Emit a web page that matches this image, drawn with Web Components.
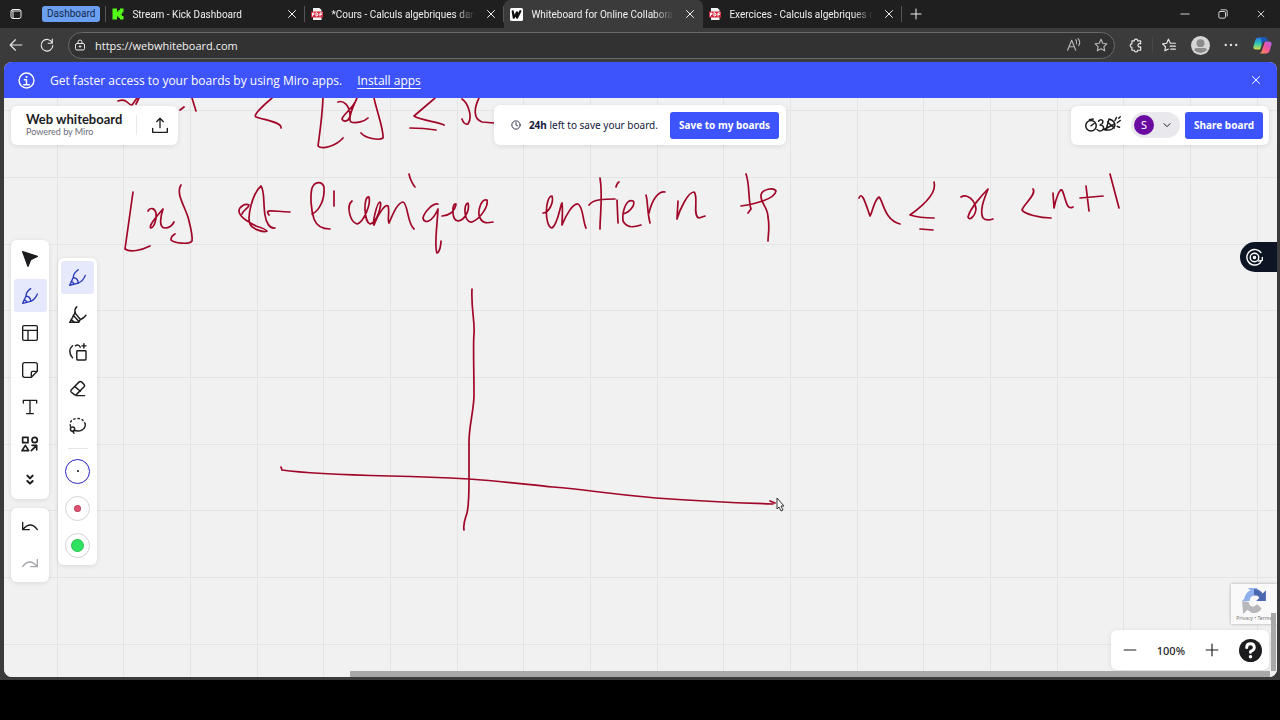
<!DOCTYPE html>
<html lang="en">
<head>
<meta charset="utf-8">
<meta name="viewport" content="width=device-width, initial-scale=1">
<title>Whiteboard for Online Collaboration</title>
<style>
    html, body {
        margin: 0;
        height: 100%;
        background: #000;
    }

    body {
        display: flex;
        flex-direction: column;
        overflow: hidden;
        font-family: "Noto Sans", "Open Sans", sans-serif;
        font-size: 12px;
        --color-primary: #3d53fb;
        --color-chrome: #3b3b3b;
        --color-ink: #a00628;
    }

    browser-window {
        flex: 1;
        margin-bottom: 40px;
    }
</style>
</head>
<body>
<browser-window>
    <tab-strip slot="tabs">
        <browser-tab icon="kick">Stream - Kick Dashboard</browser-tab>
        <browser-tab icon="pdf">*Cours - Calculs algebriques dans R</browser-tab>
        <browser-tab icon="whiteboard" active>Whiteboard for Online Collaboration</browser-tab>
        <browser-tab icon="pdf">Exercices - Calculs algebriques dans R</browser-tab>
    </tab-strip>
    <address-bar slot="toolbar" url="https://webwhiteboard.com"></address-bar>
    <promo-banner>Get faster access to your boards by using Miro apps.</promo-banner>
    <white-board>
        <ink-canvas slot="canvas"></ink-canvas>
        <board-title slot="header"></board-title>
        <save-notice slot="header"></save-notice>
        <share-panel slot="header"></share-panel>
        <tool-rail slot="tools"></tool-rail>
        <pen-panel slot="tools"></pen-panel>
        <side-dock slot="side"></side-dock>
    </white-board>
</browser-window>

<script>
const ICONS = {
    workspaces: '<rect x="2" y="3" width="20" height="18" rx="4"/><path d="M4 6h16M6 7v13"/>',
    kick: '<path fill="#53fc18" stroke="none" d="M1 1h9v6h3V4h3V1h7v8h-3v3h-3v1h3v3h3v7h-7v-3h-3v-3h-3v6H1z"/>',
    pdf: '<path fill="#f5f5f5" stroke="none" d="M4 0h13l4 4v20H4z"/><path fill="#d5293d" stroke="none" d="M0 7h24v12H0z"/><path stroke="#fff" stroke-width="2" d="M3 16v-6h3v3H3M10 10v6h2l2-2v-2l-2-2zM18 16v-6h4M18 13h3"/>',
    whiteboard: '<rect width="24" height="24" rx="3" fill="#fff" stroke="none"/><path d="M5 6l2 12 6-10v10l6-12" stroke="#111" stroke-width="4"/>',
    close: '<path d="M5 5l14 14M19 5L5 19"/>',
    plus: '<path d="M12 2v20M2 12h20"/>',
    minus: '<path d="M2 12h20"/>',
    restore: '<rect x="2" y="6" width="16" height="16" rx="3"/><path d="M7 2h12a3 3 0 0 1 3 3v12"/>',
    back: '<path d="M22 12H2M11 3l-9 9 9 9"/>',
    reload: '<path d="M21 8A10 10 0 1 0 22 13M21 2v7h-7"/>',
    lock: '<rect x="3" y="9" width="18" height="13" rx="3"/><path d="M8 9V6a4 4 0 0 1 8 0v3"/><circle cx="12" cy="15" r="1.5" fill="currentColor"/>',
    readAloud: '<path d="M1 21L8 4l7 17M4 15h8M15 3q3 3 1 7M19 1q5 6 1 12"/>',
    star: '<path d="M12 2l3 7 7 .8-5 5 1.300 7.200L12 18.500 5.700 22 7 14.800l-5-5L9 9z"/>',
    puzzle: '<path d="M5 5h4a3 3 0 0 1 6 0h5v5a3 3 0 1 0 0 5v6h-5a3 3 0 0 1-6 0H5v-5a3 3 0 0 1 0-6z"/>',
    favorites: '<path d="M14 8l-3-6-3 7-7 1 5 5-1 7 6-3M14 9h9M14 14h9M15 19h8"/>',
    dots: '<g fill="currentColor" stroke="none"><circle cx="3" cy="12" r="2"/><circle cx="12" cy="12" r="2"/><circle cx="21" cy="12" r="2"/></g>',
    profile: '<g stroke="none"><circle cx="12" cy="12" r="12" fill="#d6d6d6"/><circle cx="12" cy="9" r="5" fill="#8c8c8c"/><path d="M4 18q0-3 3-3h10q3 0 3 3-8 7-16 0z" fill="#8c8c8c"/></g>',
    copilot: '<defs><linearGradient id="a" x1="0" y1="0" x2="0" y2="1"><stop stop-color="#2a75e8"/><stop offset=".5" stop-color="#2cc7b5"/><stop offset="1" stop-color="#d5df45"/></linearGradient><linearGradient id="b" x1="1" y1="0" x2="0" y2="1"><stop stop-color="#aa62ee"/><stop offset=".5" stop-color="#f45597"/><stop offset="1" stop-color="#ff9a4b"/></linearGradient></defs><g stroke="none"><path fill="url(#a)" d="M7 2h9q-3 1-4 6l-3 9H4q-5 0-3-5l2-7q1-3 4-3z"/><path fill="#1958bd" d="M10 2h6q2 0 3 5h-5q-2 0-3 4z"/><path fill="url(#b)" d="M17 22H8q3-1 4-6l3-9h5q5 0 3 5l-2 7q-1 3-4 3z"/></g>',
    info: '<circle cx="12" cy="12" r="10.500"/><path d="M9 11h3v7M8 18h8" /><circle cx="12" cy="7" r="1.500" fill="currentColor" stroke="none"/>',
    exportBoard: '<path d="M12 16V2M7 7l5-5 5 5M1 17v6h22v-6"/>',
    clock: '<circle cx="12" cy="12" r="10"/><path d="M12 6v6l4 2"/>',
    down: '<path d="M3 8l9 9 9-9"/>',
    select: '<path fill="currentColor" d="M1 1l22 7-10 5-4 10z"/>',
    pen: '<path d="M13 1Q6 6 6 12L1 23l12-3Q20 17 23 9M6 12q7 1 7 8M3 18q3 0 4 3"/>',
    marker: '<path d="M11 1Q7 5 9 9L1 23h13l2-4q4-1 8-6M8 9l8 10M6 13l8 9M3 19l5 4"/>',
    template: '<rect x="1" y="1" width="22" height="22" rx="2"/><path d="M1 8h22M9 8v15"/>',
    sticky: '<path d="M23 14V4a3 3 0 0 0-3-3H4a3 3 0 0 0-3 3v16a3 3 0 0 0 3 3h10zM14 23v-7a2 2 0 0 1 2-2h7"/>',
    text: '<path d="M2 6V2h20v4M12 2v20M7 22h10"/>',
    shapes: '<g stroke-width="2.500"><rect x="1" y="2" width="8" height="8"/><circle cx="19" cy="6" r="4"/><path d="M5 14l5 8H0zM14 22l8-8M15 14h7v7"/></g>',
    more: '<path stroke-width="3" d="M8 4l4 4 4-4M8 12l4 4 4-4"/>',
    undo: '<path d="M1 5v11h10M1 16Q13 2 23 16"/>',
    redo: '<path d="M23 5v11H13M23 16Q11 2 1 16"/>',
    smart: '<rect x="11" y="11" width="13" height="13" rx="1"/><path d="M5 21Q-3 11 5 4M9 4q4-3 7 2M18 4h6M21 1v6"/>',
    eraser: '<path d="M3 14L14 3q2-2 4 0l3 3q2 2 0 4L10 21H8l-5-4q-1-1 0-3zM8 9l8 7M10 22h12"/>',
    lasso: '<circle cx="5" cy="17" r="3"/><path d="M7 19q-2 2 0 4M8 19c7 2 15-1 15-8 0-1 0-2-1-3"/><path d="M2 13Q0 3 12 2q7 0 10 6" stroke-dasharray="2 4"/>',
    doodle: '<circle cx="8" cy="13" r="7"/><path d="M8 13l4-3M6 5l5-1M18 7c3-4 8-1 5 3l-3 2c7 0 6 8-1 8l-3-2M28 19l4-15q8 2 8 9-4 8-15 5l14-7M30 8l9 8M40 6l2-4M43 9l4-3M43 14l3 1M45 3l2-2"/>',
    spiral: '<circle cx="12" cy="12" r="6"/><circle cx="12" cy="12" r="1.500" fill="currentColor"/><path d="M21 5A11 11 0 1 0 16 22q4-1 5-4M23 12v4l-5 1"/>',
    help: '<circle cx="12" cy="12" r="12" fill="currentColor" stroke="none"/><path stroke="#fff" stroke-width="3" d="M8 9q0-4 4-4t4 4q0 2-4 4v1"/><circle cx="12" cy="18.500" r="1.800" fill="#fff" stroke="none"/>',
    recaptcha: '<g stroke="none"><path fill="#8fb0ed" d="M3 10Q4 4 9 2L6 0h9v7h-3q-4 1-4 5H1z"/><path fill="#4c68b0" d="M12 1q5 0 8 4l3-3v10h-9l3-3q-2-3-5-2z"/><path fill="#b8b8bc" d="M1 12l6 1q1 5 5 4l3-2 4 4q-3 5-9 4l-4-3-4 4z"/></g>'
};

class UiIcon extends HTMLElement {
    constructor() {
        super();
        this.attachShadow({ mode: 'open' });
    }

    connectedCallback() {
        const box = this.getAttribute('box') || '24';
        this.shadowRoot.innerHTML = `
            <style>
                :host {
                    display: block;
                    flex: none;
                    width: var(--icon-size, 16px);
                    height: var(--icon-height, var(--icon-size, 16px));
                }

                svg {
                    display: block;
                    width: 100%;
                    height: 100%;
                    overflow: visible;
                    fill: none;
                    stroke: currentColor;
                    stroke-width: var(--icon-stroke, 2);
                    stroke-linecap: round;
                    stroke-linejoin: round;
                }
            </style>
            <svg viewBox="0 0 ${box} 24" aria-hidden="true">${ICONS[this.getAttribute('name')]}</svg>
        `;
    }
}

class IconButton extends HTMLElement {
    constructor() {
        super();
        this.attachShadow({ mode: 'open' });
    }

    connectedCallback() {
        this.shadowRoot.innerHTML = `
            <style>
                :host {
                    display: block;
                    flex: none;
                    width: var(--button-size, 30px);
                    height: var(--button-size, 30px);
                }

                button {
                    display: grid;
                    place-items: center;
                    width: 100%;
                    height: 100%;
                    padding: 0;
                    border: 0;
                    border-radius: 3px;
                    background: none;
                    color: inherit;
                }

                :host([active]) button {
                    background: #e6e8fc;
                    color: #2a3bb8;
                }

                button:disabled {
                    color: #a6a7ae;
                }
            </style>
            <button type="button" aria-label="${this.getAttribute('label')}" ${this.hasAttribute('disabled') ? 'disabled' : ''}>
                <ui-icon name="${this.getAttribute('icon')}"></ui-icon>
            </button>
        `;
    }
}

class BrowserWindow extends HTMLElement {
    constructor() {
        super();
        this.attachShadow({ mode: 'open' });
        this.shadowRoot.innerHTML = `
            <style>
                :host {
                    display: flex;
                    flex-direction: column;
                    min-height: 0;
                    background: var(--color-chrome);
                }

                main {
                    flex: 1;
                    display: flex;
                    flex-direction: column;
                    margin: 0 3px 3px 4px;
                    border-radius: 8px;
                    overflow: hidden;
                    background: #f2f2f2;
                }
            </style>
            <slot name="tabs"></slot>
            <slot name="toolbar"></slot>
            <main><slot></slot></main>
        `;
    }
}

class TabStrip extends HTMLElement {
    constructor() {
        super();
        this.attachShadow({ mode: 'open' });
        this.shadowRoot.innerHTML = `
            <style>
                :host {
                    display: flex;
                    align-items: center;
                    height: 28px;
                    background: #1f1f1f;
                    color: #f0f0f0;
                    font: 10px Roboto, sans-serif;
                    --button-size: 28px;
                    --icon-size: 12px;
                }

                .start {
                    --icon-size: 12px;
                    --button-size: 32px;
                    height: 28px;
                    display: flex;
                    align-items: center;
                }

                .group {
                    margin-left: 10px;
                    padding: 0 5px;
                    border: 0;
                    border-radius: 3px;
                    background: #6b9ff0;
                    color: #14294d;
                    font: inherit;
                    line-height: 16px;
                }

                .divider {
                    width: 1px;
                    height: 16px;
                    margin-left: 5px;
                    background: #555;
                }

                .end {
                    --icon-size: 10px;
                    --button-size: 38px;
                    display: flex;
                    align-items: center;
                    height: 28px;
                    margin-left: auto;
                }
            </style>
            <div class="start"><icon-button icon="workspaces" label="Workspaces"></icon-button></div>
            <button type="button" class="group">Dashboard</button>
            <span class="divider"></span>
            <slot></slot>
            <icon-button icon="plus" label="New tab"></icon-button>
            <div class="end">
                <icon-button icon="minus" label="Minimize"></icon-button>
                <icon-button icon="restore" label="Restore"></icon-button>
                <icon-button icon="close" label="Close window"></icon-button>
            </div>
        `;
    }
}

class BrowserTab extends HTMLElement {
    constructor() {
        super();
        this.attachShadow({ mode: 'open' });
        this.shadowRoot.innerHTML = `
            <style>
                :host {
                    display: flex;
                    align-items: center;
                    gap: 8px;
                    box-sizing: border-box;
                    flex: 0 1 199px;
                    min-width: 0;
                    height: 28px;
                    padding: 0 5px 0 6px;
                    background: linear-gradient(#555, #555) right / 1px 16px no-repeat;
                    --icon-size: 12px;
                }

                :host([active]) {
                    background: var(--color-chrome);
                    border-radius: 6px 6px 0 0;
                    --icon-size: 13px;
                }

                .label {
                    flex: 1;
                    min-width: 0;
                    overflow: hidden;
                    white-space: nowrap;
                    -webkit-mask-image: linear-gradient(to left, transparent, #000 20px);
                    mask-image: linear-gradient(to left, transparent, #000 20px);
                }

                icon-button {
                    --button-size: 16px;
                    --icon-size: 12px;
                }
            </style>
            <ui-icon></ui-icon>
            <span class="label"><slot></slot></span>
            <icon-button icon="close" label="Close tab"></icon-button>
        `;
    }

    connectedCallback() {
        const icon = document.createElement('ui-icon');
        icon.setAttribute('name', this.getAttribute('icon'));
        this.shadowRoot.querySelector('ui-icon').replaceWith(icon);
    }
}

class AddressBar extends HTMLElement {
    constructor() {
        super();
        this.attachShadow({ mode: 'open' });
        this.shadowRoot.innerHTML = `
            <style>
                :host {
                    display: flex;
                    align-items: center;
                    gap: 1px;
                    height: 34px;
                    padding: 0 3px 0 1px;
                    background: var(--color-chrome);
                    color: #e8e8e8;
                    --icon-size: 14px;
                }

                label {
                    flex: 1;
                    display: flex;
                    align-items: center;
                    gap: 9px;
                    box-sizing: border-box;
                    height: 27px;
                    margin: 0 5px;
                    padding: 0 0 0 5px;
                    border: 1px solid #696969;
                    border-radius: 14px;
                    background: #323232;
                    --icon-size: 12px;
                }

                input {
                    flex: 1;
                    min-width: 0;
                    padding: 0;
                    border: 0;
                    outline: 0;
                    background: none;
                    color: #f2f2f2;
                    font: 11px "Open Sans", sans-serif;
                }

                .inline {
                    display: flex;
                    color: #b5b5b5;
                    --button-size: 27px;
                    --icon-size: 14px;
                }

                .divider {
                    width: 1px;
                    height: 16px;
                    background: #4a4a4a;
                }

                .large {
                    --icon-size: 19px;
                }
            </style>
            <icon-button icon="back" label="Back"></icon-button>
            <icon-button icon="reload" label="Refresh"></icon-button>
            <label>
                <ui-icon name="lock"></ui-icon>
                <input type="text" aria-label="Address" spellcheck="false">
                <span class="inline">
                    <icon-button icon="readAloud" label="Read aloud"></icon-button>
                    <icon-button icon="star" label="Add to favorites"></icon-button>
                </span>
            </label>
            <icon-button icon="puzzle" label="Extensions"></icon-button>
            <span class="divider"></span>
            <icon-button icon="favorites" label="Favorites"></icon-button>
            <icon-button class="large" icon="profile" label="Profile"></icon-button>
            <icon-button icon="dots" label="Settings"></icon-button>
            <icon-button class="large" icon="copilot" label="Copilot"></icon-button>
        `;
    }

    connectedCallback() {
        this.shadowRoot.querySelector('input').value = this.getAttribute('url');
    }
}

class PromoBanner extends HTMLElement {
    constructor() {
        super();
        this.attachShadow({ mode: 'open' });
        this.shadowRoot.innerHTML = `
            <style>
                :host {
                    display: flex;
                    align-items: center;
                    gap: 15px;
                    height: 36px;
                    padding: 0 6px 0 14px;
                    background: var(--color-primary);
                    color: #fff;
                    font-family: "Open Sans", sans-serif;
                    --icon-size: 17px;
                }

                a {
                    color: inherit;
                    text-decoration: underline;
                    text-underline-offset: 3px;
                }

                icon-button {
                    margin-left: auto;
                    --icon-size: 12px;
                }
            </style>
            <ui-icon name="info"></ui-icon>
            <span><slot></slot></span>
            <a href="#apps">Install apps</a>
            <icon-button icon="close" label="Dismiss"></icon-button>
        `;
    }
}

class WhiteBoard extends HTMLElement {
    constructor() {
        super();
        this.attachShadow({ mode: 'open' });
        this.shadowRoot.innerHTML = `
            <style>
                :host {
                    position: relative;
                    flex: 1;
                    display: flex;
                    flex-direction: column;
                    min-height: 0;
                    color: #1c1c1e;
                    --icon-stroke: 2;
                }

                header {
                    position: relative;
                    display: grid;
                    grid-template-columns: 1fr auto 1fr;
                    align-items: center;
                    padding: 7px 8px 0 7px;
                }

                .body {
                    position: relative;
                    flex: 1;
                    display: flex;
                    align-items: center;
                    gap: 9px;
                    padding-left: 7px;
                }

                ::slotted([slot="side"]) {
                    align-self: stretch;
                    margin-left: auto;
                }

                .scroll-x, .scroll-y {
                    position: absolute;
                    background: #a8a8a8;
                }

                .scroll-x {
                    left: 346px;
                    right: 7px;
                    bottom: 0;
                    height: 6px;
                }

                .scroll-y {
                    right: 1px;
                    bottom: 6px;
                    width: 5px;
                    height: 58px;
                }
            </style>
            <slot name="canvas"></slot>
            <header><slot name="header"></slot></header>
            <div class="body">
                <slot name="tools"></slot>
                <slot name="side"></slot>
            </div>
            <div class="scroll-x"></div>
            <div class="scroll-y"></div>
        `;
    }
}

// Free-hand strokes, kept in page coordinates
const STROKES = [
    'M118 101Q124 99 127 102T132 105L137 98M136 104L139 98M180 110L184 107M192 98L196 111',
    'M272 98Q252 115 256 117C264 120 282 122 281 128',
    'M133 192L125 249C130 253 142 250 150 246',
    'M148 211C150 207 155 208 156 213C157 220 154 227 151 228C148 227 155 218 163 209C161 215 158 228 165 228C170 228 173 224 174 222',
    'M181 185C176 193 183 203 188 217C190 225 193 235 192 241C189 245 174 243 171 240C171 237 173 235 175 234',
    'M242 214C244 209 249 208 249 205C245 203 239 207 239 211C239 217 250 223 256 226C262 228 267 230 267 231C264 233 252 229 250 224C247 217 252 194 261 186C265 192 263 203 265 215C266 223 270 229 275 228M269 215C265 209 269 211 290 212',
    'M323 98C322 120 319 138 318 146C322 150 336 146 343 138',
    'M338 102C343 100 350 105 350 116C349 122 343 122 342 119C343 114 354 108 357 98C354 105 347 118 351 122C356 124 365 121 368 118',
    'M374 98C377 112 384 130 383 138C379 141 365 138 361 133',
    'M435 98L414 116C420 120 438 122 444 125M410 128Q424 128 436 130',
    'M462 99C468 103 473 117 468 124C465 125 463 122 462 119M479 98C474 108 473 119 482 122L494 123',
    'M312 214C319 211 325 200 324 187C322 181 315 181 312 188C310 196 311 210 314 219C317 227 324 229 330 229M334 191L334 206',
    'M352 201C346 206 350 222 357 224C364 222 371 204 369 197C363 196 364 222 370 224C378 222 382 203 380 202C377 202 372 224 374 225C378 214 385 204 388 206C390 210 387 222 389 223C393 214 397 203 403 202C408 203 407 223 414 229M409 174C410 180 414 186 415 187',
    'M438 204C432 203 424 213 423 218C424 224 432 223 438 209C437 228 434 247 437 253C440 252 441 244 441 241',
    'M442 216C448 216 455 212 456 204C452 202 451 220 458 221C465 220 470 210 468 203C463 204 464 223 472 222C480 219 489 206 487 200C481 198 477 212 480 218C483 224 488 223 493 222',
    'M543 213C549 213 554 202 552 196C545 196 544 226 552 228C558 224 560 206 562 203C563 210 562 222 562 225C566 215 573 203 578 204C583 206 583 222 586 228',
    'M589 205C593 199 606 199 615 199M600 178C603 195 600 215 600 229M616 187Q617 183 619 182M617 200L618 223',
    'M623 214C631 212 636 203 633 201C626 198 622 212 623 221C627 229 635 227 641 225M650 223C647 211 648 202 646 195M649 213C652 200 658 191 665 192',
    'M678 201L677 219C680 209 688 192 694 192C699 196 692 216 699 218L705 216',
    'M746 174C750 185 748 200 751 209L748 213M741 206C755 204 775 199 776 191C774 187 762 189 761 195C760 203 768 207 768 217C770 228 768 235 768 241',
    'M859 198C862 190 866 205 870 216C872 214 874 200 879 197C883 200 884 220 900 224',
    'M934 182C938 195 917 210 910 215C916 217 925 218 934 218M920 229L933 230',
    'M961 197C967 193 975 200 976 209C975 217 969 221 968 217C970 208 984 193 988 189C985 197 979 210 983 218C986 221 990 220 993 219',
    'M1033 189C1037 194 1024 204 1022 210C1024 214 1040 218 1051 218',
    'M1053 193L1054 208C1056 198 1060 188 1062 190C1066 198 1066 211 1073 207',
    'M1080 198L1103 196M1086 186L1089 211M1110 174L1119 208',
    'M472 289C471 310 475 320 474 334C473 344 474 370 474 395C474 410 469 425 469 442V480C469 500 468 512 466 516Q463 525 464 530',
    'M281 467L282 470C310 474 350 475 390 476C430 477 450 478 469 479C510 482 530 485 553 487C590 490 600 493 656 498C710 502 740 503 773 504M770 501L775 503'
];

class InkCanvas extends HTMLElement {
    constructor() {
        super();
        this.attachShadow({ mode: 'open' });
        this.shadowRoot.innerHTML = `
            <style>
                :host {
                    position: absolute;
                    inset: 0;
                    background: #f1f1f1;
                }

                svg {
                    display: block;
                    width: 100%;
                    height: 100%;
                }

                .ink {
                    fill: none;
                    stroke: var(--color-ink);
                    stroke-width: 1.7;
                    stroke-linecap: round;
                    stroke-linejoin: round;
                }
            </style>
            <svg aria-hidden="true">
                <defs>
                    <pattern id="grid" width="200" height="200" patternUnits="userSpaceOnUse">
                        <path d="M53.500 0V200M119.500 0V200M186.500 0V200M0 12.500H200M0 79.500H200M0 146.500H200" stroke="#e4e4e4"/>
                    </pattern>
                </defs>
                <rect width="100%" height="100%" fill="url(#grid)"/>
                <g class="ink" transform="translate(-4 -98)">${STROKES.map(d => `<path d="${d}"/>`).join('')}</g>
                <path transform="translate(773 400)" d="M0 0v11l2-2 2 4 2-1-2-4h3z" fill="#fff" stroke="#333"/>
            </svg>
        `;
    }
}

class BoardPanel extends HTMLElement {
    constructor() {
        super();
        this.attachShadow({ mode: 'open' });
        this.shadowRoot.innerHTML = `
            <style>
                :host {
                    display: flex;
                    align-items: center;
                    box-sizing: border-box;
                    border-radius: 6px;
                    background: #fff;
                    box-shadow: 0 1px 5px #0000001a;
                }

                :host([vertical]) {
                    flex-direction: column;
                }
            </style>
            <slot></slot>
        `;
    }
}

class BoardTitle extends HTMLElement {
    constructor() {
        super();
        this.attachShadow({ mode: 'open' });
        this.shadowRoot.innerHTML = `
            <style>
                :host {
                    justify-self: start;
                }

                board-panel {
                    height: 39px;
                    padding: 0 3px 0 15px;
                    font-family: Lato, sans-serif;
                }

                .name {
                    margin-right: 14px;
                }

                strong, small {
                    display: block;
                }

                strong {
                    font-size: 13px;
                    line-height: 14px;
                }

                small {
                    font-size: 9px;
                    line-height: 12px;
                    color: #6b6b78;
                }

                icon-button {
                    padding-left: 8px;
                    border-left: 1px solid #e9e9ee;
                    --button-size: 30px;
                    height: 20px;
                    --icon-size: 16px;
                }
            </style>
            <board-panel>
                <div class="name">
                    <strong>Web whiteboard</strong>
                    <small>Powered by Miro</small>
                </div>
                <icon-button icon="exportBoard" label="Export board"></icon-button>
            </board-panel>
        `;
    }
}

class SaveNotice extends HTMLElement {
    constructor() {
        super();
        this.attachShadow({ mode: 'open' });
        this.shadowRoot.innerHTML = `
            <style>
                board-panel {
                    height: 40px;
                    padding: 0 7px 0 17px;
                    font-size: 10px;
                    color: #14183a;
                    --icon-size: 10px;
                }

                span {
                    margin: 0 12px 0 8px;
                }

                button {
                    height: 27px;
                    padding: 0 9px;
                    border: 0;
                    border-radius: 3px;
                    background: var(--color-primary);
                    color: #fff;
                    font: 700 10px "Noto Sans", sans-serif;
                }
            </style>
            <board-panel>
                <ui-icon name="clock"></ui-icon>
                <span><b>24h</b> left to save your board.</span>
                <button type="button">Save to my boards</button>
            </board-panel>
        `;
    }
}

class SharePanel extends HTMLElement {
    constructor() {
        super();
        this.attachShadow({ mode: 'open' });
        this.shadowRoot.innerHTML = `
            <style>
                :host {
                    justify-self: end;
                }

                board-panel {
                    height: 39px;
                    padding: 0 6px 0 14px;
                }

                button {
                    border: 0;
                    padding: 0;
                    background: none;
                    color: inherit;
                }

                .reactions {
                    --icon-size: 36px;
                    --icon-height: 18px;
                }

                .user {
                    display: flex;
                    align-items: center;
                    gap: 9px;
                    height: 26px;
                    margin: 0 5px 0 10px;
                    padding: 0 9px 0 3px;
                    border-radius: 13px;
                    background: #e9e9ed;
                    --icon-size: 8px;
                    --icon-stroke: 3;
                }

                .avatar {
                    width: 20px;
                    border-radius: 50%;
                    background: #6a0aa0;
                    color: #fff;
                    font: 11px/20px "Noto Sans", sans-serif;
                }

                .share {
                    height: 27px;
                    padding: 0 9px;
                    border-radius: 3px;
                    background: var(--color-primary);
                    color: #fff;
                    font: 700 10px "Noto Sans", sans-serif;
                }
            </style>
            <board-panel>
                <button type="button" class="reactions" aria-label="Timer and reactions"><ui-icon name="doodle" box="48"></ui-icon></button>
                <button type="button" class="user"><span class="avatar">S</span><ui-icon name="down"></ui-icon></button>
                <button type="button" class="share">Share board</button>
            </board-panel>
        `;
    }
}

class ToolRail extends HTMLElement {
    constructor() {
        super();
        this.attachShadow({ mode: 'open' });
        this.shadowRoot.innerHTML = `
            <style>
                :host {
                    display: flex;
                    flex-direction: column;
                    gap: 9px;
                    --button-size: 33px;
                    --icon-size: 16px;
                }

                board-panel {
                    width: 38px;
                    gap: 4px;
                    padding: 2px 0;
                }
            </style>
            <board-panel vertical>
                <icon-button icon="select" label="Select"></icon-button>
                <icon-button icon="pen" label="Pen" active></icon-button>
                <icon-button icon="template" label="Templates"></icon-button>
                <icon-button icon="sticky" label="Sticky note"></icon-button>
                <icon-button icon="text" label="Text"></icon-button>
                <icon-button icon="shapes" label="Shapes"></icon-button>
                <icon-button icon="more" label="More tools"></icon-button>
            </board-panel>
            <board-panel vertical>
                <icon-button icon="undo" label="Undo"></icon-button>
                <icon-button icon="redo" label="Redo" disabled></icon-button>
            </board-panel>
        `;
    }
}

class PenPanel extends HTMLElement {
    constructor() {
        super();
        this.attachShadow({ mode: 'open' });
        this.shadowRoot.innerHTML = `
            <style>
                board-panel {
                    width: 39px;
                    gap: 4px;
                    padding: 3px 0 7px;
                    --button-size: 33px;
                    --icon-size: 17px;
                }

                hr {
                    width: 20px;
                    height: 1px;
                    margin: 2px 0 6px;
                    border: 0;
                    background: #e4e4ea;
                }

                .swatch {
                    display: grid;
                    place-items: center;
                    box-sizing: border-box;
                    width: 25px;
                    height: 25px;
                    margin-bottom: 8px;
                    padding: 0;
                    border: 1px solid #d3d3d8;
                    border-radius: 50%;
                    background: #fff;
                }

                .swatch:last-child {
                    margin-bottom: 0;
                }

                .swatch.current {
                    border-color: #2a22c4;
                }

                .swatch::before {
                    content: "";
                    box-sizing: border-box;
                    width: var(--dot);
                    height: var(--dot);
                    border: 1px solid #00000026;
                    border-radius: 50%;
                    background: var(--swatch);
                }
            </style>
            <board-panel vertical>
                <icon-button icon="pen" label="Pen" active></icon-button>
                <icon-button icon="marker" label="Highlighter"></icon-button>
                <icon-button icon="smart" label="Smart drawing"></icon-button>
                <icon-button icon="eraser" label="Eraser"></icon-button>
                <icon-button icon="lasso" label="Lasso"></icon-button>
                <hr>
                <button type="button" class="swatch current" aria-label="Thin pen" style="--dot: 2px; --swatch: #111"></button>
                <button type="button" class="swatch" aria-label="Red pen" style="--dot: 7px; --swatch: #e0506e"></button>
                <button type="button" class="swatch" aria-label="Green pen" style="--dot: 13px; --swatch: #2fe360"></button>
            </board-panel>
        `;
    }
}

class SideDock extends HTMLElement {
    constructor() {
        super();
        this.attachShadow({ mode: 'open' });
        this.shadowRoot.innerHTML = `
            <style>
                :host {
                    display: flex;
                    flex-direction: column;
                    align-items: flex-end;
                    padding: 97px 0 7px;
                }

                .apps {
                    width: 37px;
                    height: 30px;
                    padding: 0 0 0 6px;
                    border: 0;
                    border-radius: 15px 0 0 15px;
                    background: #0d1524;
                    color: #fff;
                    --icon-size: 17px;
                }

                .captcha {
                    display: flex;
                    flex-direction: column;
                    align-items: center;
                    box-sizing: border-box;
                    width: 46px;
                    height: 40px;
                    margin: auto 0 6px;
                    padding-top: 4px;
                    background: #f9f9f9;
                    box-shadow: 0 0 3px #0000004d;
                    white-space: nowrap;
                    color: #777;
                    font: 5px/9px "Noto Sans", sans-serif;
                    --icon-size: 26px;
                }

                .captcha a {
                    color: inherit;
                    text-decoration: none;
                }

                .zoom {
                    height: 40px;
                    margin-right: 8px;
                    padding: 0 7px 0 4px;
                    font-size: 11px;
                    font-weight: 500;
                    --icon-size: 14px;
                }

                .zoom span {
                    margin: 0 12px;
                }

                .zoom .help {
                    margin-left: 12px;
                    --button-size: 23px;
                    --icon-size: 23px;
                }
            </style>
            <button type="button" class="apps" aria-label="Open side panel"><ui-icon name="spiral"></ui-icon></button>
            <div class="captcha">
                <ui-icon name="recaptcha"></ui-icon>
                <div><a href="#privacy">Privacy</a> • <a href="#terms">Terms</a></div>
            </div>
            <board-panel class="zoom">
                <icon-button icon="minus" label="Zoom out"></icon-button>
                <span>100%</span>
                <icon-button icon="plus" label="Zoom in"></icon-button>
                <icon-button class="help" icon="help" label="Help"></icon-button>
            </board-panel>
        `;
    }
}

customElements.define('ui-icon', UiIcon);
customElements.define('icon-button', IconButton);
customElements.define('browser-window', BrowserWindow);
customElements.define('tab-strip', TabStrip);
customElements.define('browser-tab', BrowserTab);
customElements.define('address-bar', AddressBar);
customElements.define('promo-banner', PromoBanner);
customElements.define('ink-canvas', InkCanvas);
customElements.define('board-panel', BoardPanel);
customElements.define('board-title', BoardTitle);
customElements.define('save-notice', SaveNotice);
customElements.define('share-panel', SharePanel);
customElements.define('tool-rail', ToolRail);
customElements.define('pen-panel', PenPanel);
customElements.define('side-dock', SideDock);
customElements.define('white-board', WhiteBoard);
</script>
</body>
</html>
